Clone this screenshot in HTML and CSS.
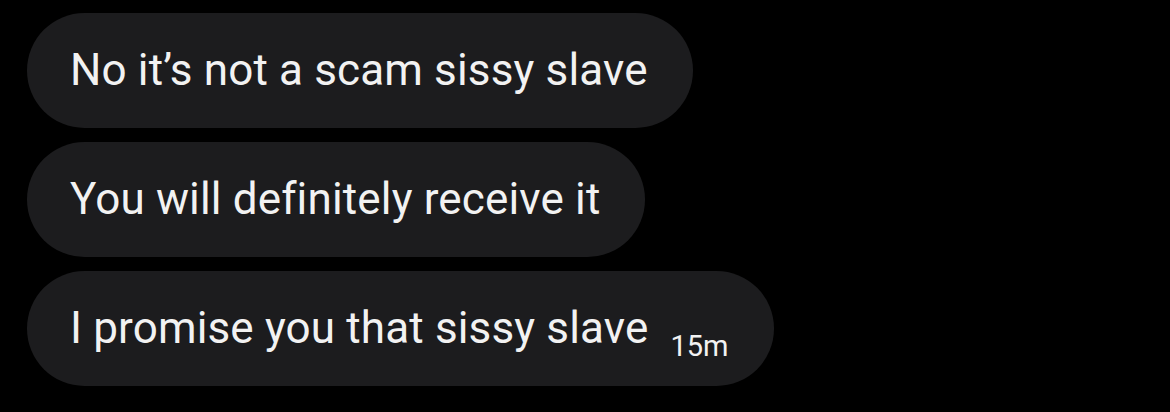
FILE: index.html
```html
<!DOCTYPE html>
<html lang="en">
<head>
    <meta charset="UTF-8">
    <meta name="viewport" content="width=device-width, initial-scale=1.0">
    <title>Messages</title>
    <link rel="stylesheet" href="styles.css">
</head>
<body>

    <div class="thread">
        <!-- Incoming messages -->
        <div class="bubble">No it’s not a scam sissy slave</div>
        <div class="bubble">You will definitely receive it</div>
        <div class="bubble">
            I promise you that sissy slave
            <span class="time">15m</span>
        </div>
    </div>

</body>
</html>
```

FILE: styles.css
```css
/* Global reset */
* {
    margin: 0;
    padding: 0;
    box-sizing: border-box;
}

body {
    background: #000;
    font-family: Roboto, 'Liberation Sans', sans-serif;
    color: #f2f2f2;
}

.thread {
    display: flex;
    flex-direction: column;
    align-items: flex-start;
    gap: 14px;
    padding: 13px 0 0 27px;
}

.bubble {
    display: flex;
    align-items: baseline;
    height: 115px;
    padding: 0 45px 0 43px;
    border-radius: 58px;
    background: #1c1c1e;
    font-size: 44px;
    letter-spacing: 0.15px;
    line-height: 115px;
}

.time {
    margin-left: 22px;
    font-size: 29px;
    letter-spacing: 0;
    position: relative;
    top: 13px;
}
```
